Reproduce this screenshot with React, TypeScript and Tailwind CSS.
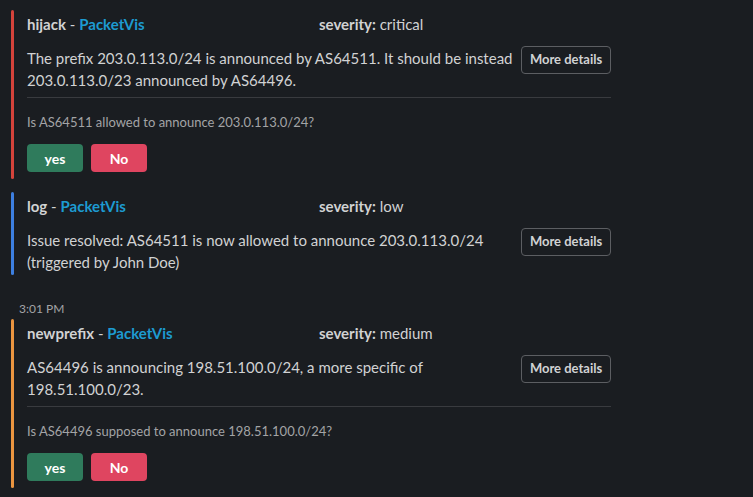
const font = { fontFamily: "Lato, 'Noto Sans', sans-serif" };

type Alert = {
  kind: string;
  severity: string;
  bar: string;
  text: string;
  question?: string;
};

const alerts: Alert[] = [
  {
    kind: "hijack",
    severity: "critical",
    bar: "bg-[#d4433b]",
    text: "The prefix 203.0.113.0/24 is announced by AS64511. It should be instead 203.0.113.0/23 announced by AS64496.",
    question: "Is AS64511 allowed to announce 203.0.113.0/24?",
  },
  {
    kind: "log",
    severity: "low",
    bar: "bg-[#3d7fe0]",
    text: "Issue resolved: AS64511 is now allowed to announce 203.0.113.0/24 (triggered by John Doe)",
  },
  {
    kind: "newprefix",
    severity: "medium",
    bar: "bg-[#eb9540]",
    text: "AS64496 is announcing 198.51.100.0/24, a more specific of 198.51.100.0/23.",
    question: "Is AS64496 supposed to announce 198.51.100.0/24?",
  },
];

const AlertCard = ({ alert, className }: { alert: Alert; className?: string }) => {
  return (
    <div className={"flex " + (className ?? "")}>
      <div className={"w-[3px] ml-[11px] shrink-0 rounded-full " + alert.bar} />
      <div className={"ml-[13px] w-[584px] " + (alert.question ? "pb-[7px]" : "pb-[2px]")}>
        <div className="grid grid-cols-2 mt-[3px] text-[15px] leading-[22px] text-[#d1d2d3]">
          <div>
            <span className="font-bold">{alert.kind}</span>
            <span> - </span>
            <span className="font-bold text-[#1d9bd1]">PacketVis</span>
          </div>
          <div>
            <span className="font-bold">severity:</span> {alert.severity}
          </div>
        </div>
        <div className="flex items-start gap-1 mt-[11px]">
          <p className="flex-1 pt-[1px] text-[15px] leading-[22px] text-[#d1d2d3]">{alert.text}</p>
          <button className="shrink-0 w-[90px] h-[28px] rounded border border-[#5c5e62] text-[13px] font-bold text-[#d1d2d3]">
            More details
          </button>
        </div>
        {alert.question && (
          <>
            <div className="mt-[6px] border-t border-[#393b3f]" />
            <p className="mt-[15px] text-[13px] leading-[18px] text-[#a3a4a6]">{alert.question}</p>
            <div className="flex gap-2 mt-[13px]">
              <button className="w-[56px] h-[28px] rounded bg-[#2f7b5c] text-[14px] font-bold text-white">yes</button>
              <button className="w-[56px] h-[28px] rounded bg-[#df4560] text-[14px] font-bold text-white">No</button>
            </div>
          </>
        )}
      </div>
    </div>
  );
};

export default function App() {
  return (
    <div className="w-[753px] h-[497px] overflow-hidden bg-[#1a1d21] pt-[10px]" style={font}>
      <AlertCard alert={alerts[0]} />
      <AlertCard alert={alerts[1]} className="mt-[13px]" />
      <div className="mt-[26px] mb-[2px] pl-[19px] text-[12px] leading-[16px] text-[#a3a4a6]">3:01 PM</div>
      <AlertCard alert={alerts[2]} />
    </div>
  );
}
